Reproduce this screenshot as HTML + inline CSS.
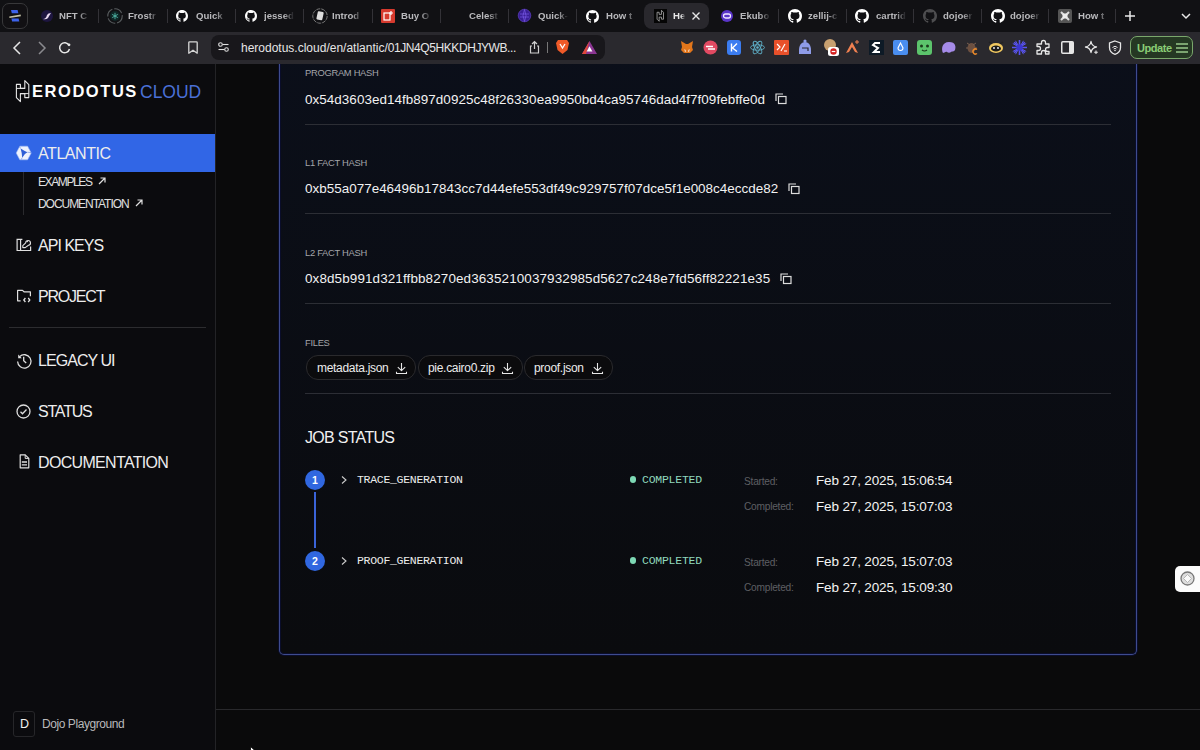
<!DOCTYPE html>
<html><head><meta charset="utf-8">
<style>
*{box-sizing:border-box;margin:0;padding:0}
html,body{width:1200px;height:750px;overflow:hidden;background:#0b0b0d;font-family:"Liberation Sans",sans-serif;color:#fff}
.a{position:absolute}
svg{position:absolute;overflow:visible}
#tabs{position:absolute;left:0;top:0;width:1200px;height:32px;background:#111114;z-index:10}
#toolbar{position:absolute;left:0;top:32px;width:1200px;height:32px;background:#2a292e;z-index:10}
#addr{position:absolute;left:211px;top:3px;width:394px;height:25px;border-radius:8px;background:#18171b}
.tt{position:absolute;top:10px;font-size:9.6px;font-weight:bold;color:#b9b9bc;white-space:nowrap;overflow:hidden;
  -webkit-mask-image:linear-gradient(to right,#000 62%,transparent 95%)}
.sep{position:absolute;top:9px;width:1px;height:14px;background:#333237}
#side{position:absolute;left:0;top:64px;width:216px;height:686px;background:#0b0b0e;border-right:1px solid #232326}
#main{position:absolute;left:216px;top:64px;width:984px;height:686px;background:#0a0a0b}
#card{position:absolute;left:279px;top:20px;width:858px;height:591px;border:1px solid #3e4b8e;border-top:none;border-radius:0 0 5px 5px;background:linear-gradient(#0b0f1a,#0a0b0e);box-shadow:0 0 0 1px #0a0d2a,inset 0 0 0 1px #0a0d2a}
.lbl{position:absolute;font-size:9.4px;letter-spacing:-0.3px;color:#a4a5a9;white-space:nowrap}
.hash{position:absolute;font-size:13.45px;color:#f2f2f2;white-space:nowrap}
.div{position:absolute;left:305px;width:806px;height:1px;background:#2c2e35}
.nav{position:absolute;left:38px;font-size:16px;color:#ededed;white-space:nowrap}
.sub{position:absolute;left:38px;font-size:12px;color:#e0e0e0;white-space:nowrap}
.pill{position:absolute;top:355px;height:25px;border:1.3px solid #2a2a2d;border-radius:12px;background:#0b0b0d}
.pt{position:absolute;top:5px;font-size:12px;letter-spacing:-0.3px;color:#ececec;white-space:nowrap}
.mono{font-family:"Liberation Mono",monospace}
.step{position:absolute;left:305px;width:20px;height:20px;border-radius:10px;background:#3067e0;color:#fff;font-size:10.5px;font-weight:bold;text-align:center;line-height:20px}
.sl{position:absolute;font-size:10.2px;letter-spacing:-0.25px;color:#5e5f63;white-space:nowrap}
.dt{position:absolute;font-size:13.5px;letter-spacing:-0.15px;color:#f4f4f4;white-space:nowrap}
</style></head><body>
<div id="tabs">
  <!-- pinned -->
  <div class="a" style="left:2px;top:3px;width:26px;height:26px;border-radius:7px;border:1.2px solid #38383a;background:#111013"></div>
  <svg style="left:9px;top:9px" width="13" height="13" viewBox="0 0 13 13"><path d="M2 1L8.6 0.9L9.4 4.3L2.8 4.3Z" fill="#3d62ea"/><path d="M0.2 7.4L11.6 5.4L11.9 7.2L0.5 9Z" fill="#c4c2a6"/><path d="M2.4 9.4L9.6 9.4L10.3 12.4L3.1 12.4Z" fill="#3d62ea"/></svg>
  <!-- NFT -->
  <svg style="left:41px;top:10px" width="12" height="12" viewBox="0 0 12 12"><circle cx="6" cy="6" r="6" fill="#1e1640"/><path d="M2 9 Q5 9 6 5 Q7 3 10 3 Q8 6 7 8 Q5 10 2 9Z" fill="#e8d8f0"/></svg>
  <div class="tt" style="left:59px;width:32px">NFT C</div>
  <div class="sep" style="left:98px"></div>
  <svg style="left:107px;top:8px" width="16" height="16" viewBox="0 0 16 16"><circle cx="8" cy="8" r="7.2" fill="none" stroke="#5a5e60" stroke-width="1.1" stroke-dasharray="9 2"/><circle cx="8" cy="8" r="5" fill="#0f2626"/><path d="M8 4.8v6.4M5.2 6.4l5.6 3.2M10.8 6.4l-5.6 3.2" stroke="#4fb8a8" stroke-width="0.9"/></svg>
  <div class="tt" style="left:128px;width:32px">Frostr</div>
  <div class="sep" style="left:167px"></div>
  <svg class="gh" style="left:176px;top:10px" width="12" height="12" viewBox="0 0 16 16"><path fill="#fff" d="M8 0C3.58 0 0 3.58 0 8c0 3.54 2.29 6.53 5.47 7.59.4.07.55-.17.55-.38 0-.19-.01-.82-.01-1.49-2.01.37-2.53-.49-2.69-.94-.09-.23-.48-.94-.82-1.13-.28-.15-.68-.52-.01-.53.63-.01 1.08.58 1.23.82.72 1.21 1.87.87 2.33.66.07-.52.28-.87.51-1.07-1.78-.2-3.640-.89-3.64-3.95 0-.87.31-1.59.82-2.15-.08-.2-.36-1.02.08-2.12 0 0 .67-.21 2.2.82.64-.18 1.32-.27 2-.27.68 0 1.36.09 2 .27 1.53-1.04 2.2-.82 2.2-.82.44 1.1.16 1.92.08 2.12.51.56.82 1.27.82 2.15 0 3.07-1.87 3.75-3.65 3.95.29.25.54.73.54 1.48 0 1.07-.01 1.93-.01 2.2 0 .21.15.46.55.38A8.013 8.013 0 0016 8c0-4.42-3.58-8-8-8z"/></svg>
  <div class="tt" style="left:196px;width:32px">Quick</div>
  <div class="sep" style="left:235px"></div>
  <svg style="left:245px;top:10px" width="12" height="12" viewBox="0 0 16 16"><use href="#ghp"/></svg>
  <div class="tt" style="left:264px;width:32px">jessed</div>
  <div class="sep" style="left:303px"></div>
  <svg style="left:312px;top:8px" width="16" height="16" viewBox="0 0 16 16"><circle cx="8" cy="8" r="7.2" fill="none" stroke="#777" stroke-width="1" stroke-dasharray="4 1"/><rect x="5" y="3.5" width="6" height="8.5" rx="1" fill="#ddd" transform="rotate(12 8 8)"/></svg>
  <div class="tt" style="left:332px;width:32px">Introd</div>
  <div class="sep" style="left:372px"></div>
  <svg style="left:381px;top:9px" width="14" height="14" viewBox="0 0 14 14"><rect width="14" height="14" rx="1" fill="#d63a2e"/><rect x="3" y="4" width="6" height="7" fill="none" stroke="#fff" stroke-width="1.2"/><path d="M10 2v4M8 4h4" stroke="#fff" stroke-width="1.2"/></svg>
  <div class="tt" style="left:401px;width:32px">Buy O</div>
  <div class="sep" style="left:440px"></div>
  <div class="tt" style="left:469px;width:32px">Celest</div>
  <div class="sep" style="left:508px"></div>
  <svg style="left:518px;top:9px" width="13" height="13" viewBox="0 0 13 13"><circle cx="6.5" cy="6.5" r="6.3" fill="#3a1f96" stroke="#6a48d8" stroke-width="0.6"/><path d="M2 5h9M2 8h9M6.5 0.5q-3 6 0 12M6.5 0.5q3 6 0 12" fill="none" stroke="#7a5ae8" stroke-width="0.7"/></svg>
  <div class="tt" style="left:538px;width:32px">Quick-</div>
  <div class="sep" style="left:576px"></div>
  <svg style="left:586px;top:10px" width="13" height="13" viewBox="0 0 16 16"><use href="#ghp"/></svg>
  <div class="tt" style="left:606px;width:32px">How t</div>
  <!-- active tab -->
  <div class="a" style="left:644px;top:3px;width:65px;height:26px;border-radius:8px;background:#29282d"></div>
  <div class="a" style="left:654px;top:9px;width:13px;height:14px;background:#050505"></div>
  <svg style="left:655px;top:10px" width="11" height="12" viewBox="15 80 16 23"><path d="M16.4 84.4H20.4V88.4H24.8V80.6L28.8 84.6V97.6H24.8V93.6H20.4V101.6L16.4 97.6Z" fill="none" stroke="#a8a8a8" stroke-width="1.6" stroke-linejoin="round"/></svg>
  <div class="tt" style="left:673px;width:13px;color:#e8e8e8">He</div>
  <svg style="left:692px;top:12px" width="8" height="8" viewBox="0 0 8 8"><path d="M0.5 0.5l7 7M7.5 0.5l-7 7" stroke="#e6e6e6" stroke-width="1.4"/></svg>
  <svg style="left:721px;top:10px" width="12" height="12" viewBox="0 0 12 12"><circle cx="6" cy="6" r="6" fill="#5a35c8"/><rect x="2.5" y="4" width="7" height="4" rx="2" fill="none" stroke="#f0e8ff" stroke-width="1.3"/></svg>
  <div class="tt" style="left:740px;width:32px">Ekubo</div>
  <div class="sep" style="left:778px"></div>
  <svg style="left:788px;top:9px" width="14" height="14" viewBox="0 0 16 16"><use href="#ghp"/></svg>
  <div class="tt" style="left:808px;width:32px">zellij-c</div>
  <div class="sep" style="left:846px"></div>
  <svg style="left:855px;top:9px" width="14" height="14" viewBox="0 0 16 16"><use href="#ghp"/></svg>
  <div class="tt" style="left:876px;width:32px">cartrid</div>
  <div class="sep" style="left:913px"></div>
  <svg style="left:923px;top:9px;opacity:0.25" width="14" height="14" viewBox="0 0 16 16"><use href="#ghp"/></svg>
  <div class="tt" style="left:943px;width:32px">dojoer</div>
  <div class="sep" style="left:981px"></div>
  <svg style="left:991px;top:9px" width="14" height="14" viewBox="0 0 16 16"><use href="#ghp"/></svg>
  <div class="tt" style="left:1010px;width:32px">dojoer</div>
  <div class="sep" style="left:1048px"></div>
  <svg style="left:1058px;top:9px" width="14" height="14" viewBox="0 0 14 14"><rect width="14" height="14" rx="2" fill="#555"/><path d="M3 3l8 8M11 3l-8 8" stroke="#ddd" stroke-width="2"/><rect x="4.5" y="4.5" width="5" height="5" fill="#eee"/></svg>
  <div class="tt" style="left:1078px;width:32px">How t</div>
  <div class="sep" style="left:1115px"></div>
  <svg style="left:1125px;top:11px" width="10" height="10" viewBox="0 0 10 10"><path d="M5 0v10M0 5h10" stroke="#e8e8e8" stroke-width="1.5"/></svg>
  <svg style="left:1181px;top:13px" width="10" height="6" viewBox="0 0 10 6"><path d="M1 1l4 4 4-4" fill="none" stroke="#e8e8e8" stroke-width="1.5"/></svg>
</div>
<svg width="0" height="0" style="position:absolute"><defs><path id="ghp" fill="#fff" d="M8 0C3.58 0 0 3.580 0 8c0 3.54 2.29 6.53 5.47 7.59.4.07.55-.17.55-.38 0-.19-.01-.82-.01-1.49-2.01.37-2.53-.49-2.69-.94-.09-.23-.48-.94-.82-1.13-.28-.15-.68-.52-.01-.53.63-.01 1.08.58 1.23.82.72 1.21 1.87.87 2.33.66.07-.52.28-.87.51-1.07-1.78-.2-3.64-.89-3.64-3.95 0-.87.31-1.59.82-2.15-.08-.2-.36-1.02.08-2.12 0 0 .67-.21 2.2.82.64-.18 1.32-.27 2-.27.68 0 1.36.09 2 .27 1.53-1.04 2.2-.82 2.2-.82.44 1.1.16 1.92.08 2.12.51.56.82 1.27.82 2.15 0 3.07-1.87 3.75-3.65 3.95.29.25.54.73.54 1.48 0 1.07-.01 1.93-.01 2.2 0 .21.15.46.55.38A8.013 8.013 0 0016 8c0-4.42-3.58-8-8-8z"/></defs></svg>

<div id="toolbar">
  <svg style="left:13px;top:9px" width="8" height="14" viewBox="0 0 8 14"><path d="M7 1L1 7l6 6" fill="none" stroke="#e6e6e6" stroke-width="1.5"/></svg>
  <svg style="left:38px;top:9px" width="8" height="14" viewBox="0 0 8 14"><path d="M1 1l6 6-6 6" fill="none" stroke="#8a8a8e" stroke-width="1.5"/></svg>
  <svg style="left:58px;top:9px" width="13" height="13" viewBox="0 0 13 13"><path d="M11 4.2A5 5 0 1 0 11.5 8" fill="none" stroke="#e6e6e6" stroke-width="1.5"/><circle cx="11" cy="3.8" r="1.4" fill="#e6e6e6"/></svg>
  <svg style="left:188px;top:9px" width="10" height="13" viewBox="0 0 10 13"><path d="M1.6 0.8H8.4Q9.2 0.8 9.2 1.6V12.2L5 9.2L0.8 12.2V1.6Q0.8 0.8 1.6 0.8Z" fill="none" stroke="#d6d6d6" stroke-width="1.3" stroke-linejoin="round"/></svg>
  <div id="addr">
    <svg style="left:7px;top:7px" width="11" height="10" viewBox="0 0 11 10"><circle cx="2.5" cy="2.5" r="1.8" fill="none" stroke="#ddd" stroke-width="1.1"/><path d="M4.5 2.5h6" stroke="#ddd" stroke-width="1.1"/><circle cx="8.5" cy="7.5" r="1.8" fill="none" stroke="#ddd" stroke-width="1.1"/><path d="M0.5 7.5h6" stroke="#ddd" stroke-width="1.1"/></svg>
    <div class="a" style="left:30px;top:6px;font-size:12px;color:#e6e6e6;white-space:nowrap">herodotus.cloud/en/atlantic/<span style="letter-spacing:-0.42px">01JN4Q5HKKDHJYWB...</span></div>
    <svg style="left:318px;top:6px" width="11" height="13" viewBox="0 0 11 13"><path d="M3 5H1.5v7h8V5H8M5.5 8V1M3 3l2.5-2.5L8 3" fill="none" stroke="#cfcfcf" stroke-width="1.2"/></svg>
    <div class="a" style="left:336px;top:7px;width:1px;height:11px;background:#777"></div>
    <svg style="left:345px;top:4px" width="13" height="16" viewBox="0 0 13 16"><path d="M2 1h9l2 3-1.5 7L6.5 15 1.5 11 0 4z" fill="#f05a28"/><path d="M4 5l2.5 4L9 5" stroke="#fff" stroke-width="1.3" fill="none"/></svg>
    <svg style="left:371px;top:6px" width="15" height="13" viewBox="0 0 15 13"><path d="M7.5 0L15 13H0z" fill="#8a3592"/><path d="M7.5 0L0 13H4z" fill="#e0493a"/><path d="M7.5 5.2L10.4 10.4H4.6z" fill="#fff"/></svg>
  </div>
  <!-- extensions -->
  <svg style="left:680px;top:8px" width="14" height="14" viewBox="0 0 14 14"><path d="M1 1l5 3h2l5-3-1 6 1 3-3 3H4l-3-3 1-3z" fill="#e2761b"/><path d="M4 9l2 1v2H5zM10 9l-2 1v2h1z" fill="#f6f6f6" opacity=".6"/></svg>
  <svg style="left:703px;top:40px;top:8px" width="15" height="15" viewBox="0 0 15 15"><circle cx="7.5" cy="7.5" r="7" fill="#e24a62"/><path d="M3 6.5h7M5 9h7" stroke="#fff" stroke-width="1.4"/></svg>
  <svg style="left:727px;top:8px" width="14" height="15" viewBox="0 0 14 15"><rect width="14" height="15" rx="3" fill="#3b7cf0"/><path d="M4.5 3.5v8M10 3.5l-4.5 4.5 4.5 3.5" fill="none" stroke="#fff" stroke-width="1.4"/></svg>
  <svg style="left:750px;top:8px" width="15" height="15" viewBox="0 0 15 15"><g fill="none" stroke="#5fb0c8" stroke-width="0.9"><ellipse cx="7.5" cy="7.5" rx="7" ry="2.7"/><ellipse cx="7.5" cy="7.5" rx="7" ry="2.7" transform="rotate(60 7.5 7.5)"/><ellipse cx="7.5" cy="7.5" rx="7" ry="2.7" transform="rotate(120 7.5 7.5)"/></g><circle cx="7.5" cy="7.5" r="1.3" fill="#5fb0c8"/></svg>
  <svg style="left:774px;top:8px" width="15" height="15" viewBox="0 0 15 15"><rect width="15" height="15" rx="1" fill="#e8502a"/><path d="M3 4l3 3-3 3M7 11l4-7M10 11h3" stroke="#fff" stroke-width="1.2" fill="none"/></svg>
  <svg style="left:798px;top:7px" width="14" height="16" viewBox="0 0 14 16"><path d="M7 3C3 3 1 7 1 11v4h12v-4c0-4-2-8-6-8z" fill="#8f9ce8"/><circle cx="7" cy="2" r="1.6" fill="#8f9ce8"/><path d="M4 9h6v3" stroke="#2a292e" stroke-width="1.2" fill="none"/></svg>
  <svg style="left:823px;top:7px" width="17" height="17" viewBox="0 0 17 17"><circle cx="7" cy="6" r="6" fill="#c8a070"/><rect x="5" y="8" width="11" height="9" rx="2.5" fill="#fff"/><circle cx="10.5" cy="12.5" r="3.2" fill="#d42020"/><path d="M8.7 12.5h3.6" stroke="#fff" stroke-width="1.2"/></svg>
  <svg style="left:845px;top:7px" width="15" height="15" viewBox="0 0 15 15"><path d="M1 14L7 3l6 11-3-1-3-5-3 5z" fill="#f08050"/><path d="M12 1v4M10 3h4" stroke="#f08050" stroke-width="1"/></svg>
  <svg style="left:869px;top:8px" width="15" height="15" viewBox="0 0 15 15"><rect width="15" height="15" fill="#0d1a26"/><path d="M11 3H6L4 5l5 3-4 4h6" fill="none" stroke="#fff" stroke-width="2"/></svg>
  <svg style="left:893px;top:8px" width="15" height="15" viewBox="0 0 15 15"><rect width="15" height="15" rx="2" fill="#4a8ef0"/><path d="M7.5 3L10 8a2.5 2.5 0 1 1-5 0z" fill="none" stroke="#fff" stroke-width="1.1"/></svg>
  <svg style="left:917px;top:8px" width="15" height="15" viewBox="0 0 15 15"><rect width="15" height="15" rx="3" fill="#5cc46c"/><circle cx="4.5" cy="6" r="1.5" fill="#1c3a1c"/><circle cx="10.5" cy="6" r="1.5" fill="#1c3a1c"/><path d="M5 10q2.5 2 5 0" stroke="#1c3a1c" stroke-width="1.2" fill="none"/></svg>
  <svg style="left:941px;top:9px" width="15" height="12" viewBox="0 0 15 12"><path d="M2 12C0 8 1 1 8 1s7 5 6 8c-1 2-3 1-4 2s-3 1-4 0-3 1-4 1z" fill="#a58be8"/></svg>
  <svg style="left:965px;top:8px" width="15" height="15" viewBox="0 0 15 15"><ellipse cx="6.5" cy="8" rx="4" ry="5" fill="#6d5040"/><path d="M2 3l3 2M11 3l-3 2M1 8h2M10 8h2" stroke="#7a6050" stroke-width="1"/><path d="M12 9.5a2.5 2.5 0 1 0 0 4" fill="none" stroke="#e8882a" stroke-width="1.5"/></svg>
  <svg style="left:988px;top:9px" width="16" height="13" viewBox="0 0 16 13"><path d="M1 1l3 2M15 1l-3 2" stroke="#222" stroke-width="1.5"/><ellipse cx="8" cy="7" rx="7" ry="5" fill="#f0c860"/><ellipse cx="8" cy="7.5" rx="5" ry="3" fill="#1a1a1a"/><circle cx="6" cy="7" r="0.9" fill="#fff"/><circle cx="10" cy="7" r="0.9" fill="#fff"/></svg>
  <svg style="left:1012px;top:8px" width="15" height="15" viewBox="0 0 15 15"><g stroke="#5a55f0" stroke-width="1.6"><path d="M7.5 0v15M0 7.5h15M2.2 2.2l10.6 10.6M12.8 2.2L2.2 12.8"/><path d="M3.5 0.8l8 13.4M11.5 0.8l-8 13.4M0.8 3.5l13.4 8M0.8 11.5l13.4-8" stroke-width="1"/></g><circle cx="7.5" cy="7.5" r="3.2" fill="#3c36d0"/></svg>
  <svg style="left:1036px;top:8px" width="15" height="15" viewBox="0 0 15 15"><path d="M5.5 2.5a2 2 0 0 1 4 0V4H13v3.5h-1.5a2 2 0 0 0 0 4H13V14H9.5v-1.5a2 2 0 0 0-4 0V14H1v-3.5h1.5a2 2 0 0 0 0-4H1V4h4.5z" fill="none" stroke="#e6e6e6" stroke-width="1.3" stroke-linejoin="round"/></svg>
  <svg style="left:1061px;top:9px" width="13" height="13" viewBox="0 0 13 13"><rect x="0.75" y="0.75" width="11.5" height="11.5" rx="1" fill="none" stroke="#e6e6e6" stroke-width="1.5"/><rect x="8" y="1" width="4" height="11" fill="#e6e6e6"/></svg>
  <svg style="left:1084px;top:8px" width="15" height="15" viewBox="0 0 15 15"><path d="M7 1.5Q7.8 6.2 12.5 7 7.8 7.8 7 12.5 6.2 7.8 1.5 7 6.2 6.2 7 1.5z" fill="none" stroke="#e6e6e6" stroke-width="1.3" stroke-linejoin="round"/><path d="M12 10.5v3.5M10.2 12.2h3.6" stroke="#e6e6e6" stroke-width="1.1"/></svg>
  <svg style="left:1108px;top:8px" width="14" height="15" viewBox="0 0 14 15"><path d="M7 1l5.5 2v4.5c0 3.5-2.5 5.8-5.5 6.8C4 13.3 1.5 11 1.5 7.5V3z" fill="none" stroke="#e6e6e6" stroke-width="1.3"/><path d="M4.5 7.5a3.5 3.5 0 0 1 5 0M5.7 9a1.8 1.8 0 0 1 2.6 0" fill="none" stroke="#e6e6e6" stroke-width="1"/><circle cx="7" cy="10.5" r="0.8" fill="#e6e6e6"/></svg>
  <div class="a" style="left:1130px;top:4px;width:63px;height:23px;border-radius:7px;border:1.5px solid #7aa86c;background:#253823"></div>
  <div class="a" style="left:1137px;top:10px;font-size:11px;font-weight:bold;letter-spacing:-0.45px;color:#8acd76;white-space:nowrap">Update</div>
  <svg style="left:1176px;top:11px" width="12" height="10" viewBox="0 0 12 10"><path d="M0 1h12M0 5h12M0 9h12" stroke="#98c88a" stroke-width="1.4"/></svg>
</div>

<div id="side">
  <svg style="left:15px;top:16px" width="16" height="23" viewBox="15 80 16 23"><path d="M16.4 84.4H20.4V88.4H24.8V80.6L28.8 84.6V97.6H24.8V93.6H20.4V101.6L16.4 97.6Z" fill="none" stroke="#e6e6e6" stroke-width="1.1" stroke-linejoin="round"/><path d="M16.4 88.4H24.8M20.4 93.6H28.8" fill="none" stroke="#e6e6e6" stroke-width="1"/></svg>
  <div class="a" style="left:32px;top:18px;font-size:16.5px;font-weight:bold;color:#fff;white-space:nowrap;letter-spacing:1.55px">ERODOTUS</div>
  <div class="a" style="left:140px;top:18px;font-size:17.5px;color:#4a70d6;white-space:nowrap">CLOUD</div>

  <div class="a" style="left:0;top:70px;width:215px;height:38px;background:#3166e6"></div>
  <svg style="left:16px;top:82px" width="16" height="14" viewBox="0 0 16 14"><path d="M0.2 7L3.8 0.2H11.6L15.2 7L11.6 13.8H3.8Z" fill="#eef2fd" stroke="#9db8f3" stroke-width="0.6"/><path d="M4.6 2.4Q8.3 4.8 11.4 6.2Q8.2 7.6 6.2 11.7Q5.9 6.4 4.6 2.4Z" fill="#2f5fd6"/><path d="M4.6 2.4L3.6 0.6M11.4 6.2L15 6.6M6.2 11.7L5.2 13.5" stroke="#5d84e4" stroke-width="0.6"/></svg>
  <div class="nav" style="top:81px;letter-spacing:-0.43px">ATLANTIC</div>
  <div class="a" style="left:23px;top:108px;width:1px;height:43px;background:#2a2a2d"></div>
  <div class="sub" style="top:111px;letter-spacing:-1.39px">EXAMPLES</div>
  <svg style="left:98px;top:113px" width="8" height="8" viewBox="0 0 8 8"><path d="M1 7l6-6M2.5 1H7v4.5" fill="none" stroke="#e0e0e0" stroke-width="1.2"/></svg>
  <div class="sub" style="top:133px;letter-spacing:-1.05px">DOCUMENTATION</div>
  <svg style="left:135px;top:135px" width="8" height="8" viewBox="0 0 8 8"><path d="M1 7l6-6M2.5 1H7v4.5" fill="none" stroke="#e0e0e0" stroke-width="1.2"/></svg>

  <svg style="left:16px;top:238px;top:174px" width="16" height="14" viewBox="0 0 16 14"><path d="M6.4 1.3H1.1V12.5H14.6V8.6M4.6 1.3V12.5" fill="none" stroke="#e0e0e0" stroke-width="1.2"/><path d="M6.8 9.6V7.7L9.7 4.8A2.4 2.4 0 1 1 12.5 7.3L9.2 9.6Z" fill="none" stroke="#e0e0e0" stroke-width="1.1" stroke-linejoin="round"/><circle cx="11.3" cy="3.5" r="0.7" fill="#e0e0e0"/></svg>
  <div class="nav" style="top:173px;letter-spacing:-0.96px">API KEYS</div>
  <svg style="left:16px;top:225px" width="16" height="14" viewBox="0 0 16 14"><path d="M4.6 11.8H1.6V1.4H6.5L8 2.8H14.4V7.2" fill="none" stroke="#e0e0e0" stroke-width="1.2" stroke-linejoin="round"/><path d="M9.4 9L7.8 11L9.4 13M12.2 9L13.8 11L12.2 13" fill="none" stroke="#e0e0e0" stroke-width="1.3"/></svg>
  <div class="nav" style="top:224px;letter-spacing:-1.2px">PROJECT</div>
  <div class="a" style="left:9px;top:263px;width:197px;height:1px;background:#2c2c2f"></div>

  <svg style="left:16px;top:288px" width="16" height="16" viewBox="0 0 16 16"><path d="M3.6 4.6A6.7 6.7 0 1 1 1.6 9.6" fill="none" stroke="#e0e0e0" stroke-width="1.3"/><path d="M2.2 2.6V6.2H5.8Z" fill="#e0e0e0"/><path d="M7.7 4.8V8.6L10.2 11" fill="none" stroke="#e0e0e0" stroke-width="1.3"/></svg>
  <div class="nav" style="top:288px;letter-spacing:-0.94px">LEGACY UI</div>
  <svg style="left:16px;top:340px" width="15" height="15" viewBox="0 0 15 15"><circle cx="7.5" cy="7.5" r="6.5" fill="none" stroke="#ddd" stroke-width="1.3"/><path d="M4.5 7.8l2 2 4-4.3" fill="none" stroke="#ddd" stroke-width="1.3"/></svg>
  <div class="nav" style="top:339px;letter-spacing:-1.2px">STATUS</div>
  <svg style="left:19px;top:390px" width="11" height="15" viewBox="0 0 11 15"><path d="M1.2 0.8H6.2L9.8 4.4V13.8H1.2Z" fill="none" stroke="#e0e0e0" stroke-width="1.2" stroke-linejoin="round"/><path d="M6.2 0.8V4.4H9.8" fill="none" stroke="#e0e0e0" stroke-width="1"/><path d="M2.8 8h5.2M2.8 10.9h5.2" stroke="#e0e0e0" stroke-width="1.3"/></svg>
  <div class="nav" style="top:390px;letter-spacing:-0.67px">DOCUMENTATION</div>

  <div class="a" style="left:13px;top:647px;width:22px;height:26px;border:1px solid #262629;border-radius:3px"></div>
  <div class="a" style="left:20px;top:653px;font-size:12.5px;color:#f0f0f0">D</div>
  <div class="a" style="left:42px;top:653px;font-size:12px;color:#b9b9bb;white-space:nowrap;letter-spacing:-0.43px">Dojo Playground</div>
</div>

<div id="main">
  <div class="a" style="left:0;top:645px;width:984px;height:1px;background:#29292c"></div>
</div>
<div id="card" style="top:40px;height:615px"></div>

<div class="lbl" style="left:305px;top:67px">PROGRAM HASH</div>
<div class="hash" style="left:305px;top:92px;letter-spacing:0.046px">0x54d3603ed14fb897d0925c48f26330ea9950bd4ca95746dad4f7f09febffe0d</div>
<svg style="left:775px;top:93px" width="12" height="11" viewBox="0 0 12 11"><path d="M1 8V1h7" fill="none" stroke="#ddd" stroke-width="1.2"/><rect x="3.5" y="3.5" width="7.5" height="7" fill="none" stroke="#ddd" stroke-width="1.2"/></svg>
<div class="div" style="top:124px"></div>
<div class="lbl" style="left:305px;top:157px">L1 FACT HASH</div>
<div class="hash" style="left:305px;top:181px;letter-spacing:0.015px">0xb55a077e46496b17843cc7d44efe553df49c929757f07dce5f1e008c4eccde82</div>
<svg style="left:788px;top:183px" width="12" height="11" viewBox="0 0 12 11"><path d="M1 8V1h7" fill="none" stroke="#ddd" stroke-width="1.2"/><rect x="3.5" y="3.5" width="7.5" height="7" fill="none" stroke="#ddd" stroke-width="1.2"/></svg>
<div class="div" style="top:213px"></div>
<div class="lbl" style="left:305px;top:247px">L2 FACT HASH</div>
<div class="hash" style="left:305px;top:271px;letter-spacing:0.12px">0x8d5b991d321ffbb8270ed3635210037932985d5627c248e7fd56ff82221e35</div>
<svg style="left:780px;top:273px" width="12" height="11" viewBox="0 0 12 11"><path d="M1 8V1h7" fill="none" stroke="#ddd" stroke-width="1.2"/><rect x="3.5" y="3.5" width="7.5" height="7" fill="none" stroke="#ddd" stroke-width="1.2"/></svg>
<div class="div" style="top:303px"></div>
<div class="lbl" style="left:305px;top:337px">FILES</div>

<div class="pill" style="left:306px;width:110px"><div class="pt" style="left:10px">metadata.json</div>
  <svg style="left:89px;top:6px" width="11" height="12" viewBox="0 0 11 12"><path d="M5.5 1V8.4M1.8 5.2L5.5 8.6L9.2 5.2M0.5 9.7V11.5H10.5V9.7" fill="none" stroke="#e6e6e6" stroke-width="1.1" stroke-linejoin="round"/></svg></div>
<div class="pill" style="left:418px;width:105px"><div class="pt" style="left:9px">pie.cairo0.zip</div>
  <svg style="left:83px;top:6px" width="11" height="12" viewBox="0 0 11 12"><path d="M5.5 1V8.4M1.8 5.2L5.5 8.6L9.2 5.2M0.5 9.7V11.5H10.5V9.7" fill="none" stroke="#e6e6e6" stroke-width="1.1" stroke-linejoin="round"/></svg></div>
<div class="pill" style="left:524px;width:89px"><div class="pt" style="left:9px">proof.json</div>
  <svg style="left:67px;top:6px" width="11" height="12" viewBox="0 0 11 12"><path d="M5.5 1V8.4M1.8 5.2L5.5 8.6L9.2 5.2M0.5 9.7V11.5H10.5V9.7" fill="none" stroke="#e6e6e6" stroke-width="1.1" stroke-linejoin="round"/></svg></div>
<div class="div" style="top:393px"></div>

<div class="a" style="left:305px;top:429px;font-size:16px;letter-spacing:-0.7px;color:#f0f0f0;white-space:nowrap">JOB STATUS</div>

<div class="a" style="left:314px;top:492px;width:2px;height:56px;background:#3a63d8"></div>
<div class="step" style="top:470px">1</div>
<div class="step" style="top:551px">2</div>
<svg style="left:341px;top:476px" width="6" height="8" viewBox="0 0 6 8"><path d="M1 0.5L5 4 1 7.5" fill="none" stroke="#ccc" stroke-width="1.1"/></svg>
<svg style="left:341px;top:557px" width="6" height="8" viewBox="0 0 6 8"><path d="M1 0.5L5 4 1 7.5" fill="none" stroke="#ccc" stroke-width="1.1"/></svg>
<div class="a mono" style="left:357px;top:473px;font-size:11.5px;letter-spacing:-0.3px;color:#ececec">TRACE_GENERATION</div>
<div class="a mono" style="left:357px;top:554px;font-size:11.5px;letter-spacing:-0.3px;color:#ececec">PROOF_GENERATION</div>
<div class="a" style="left:629.5px;top:476px;width:6.5px;height:6.5px;border-radius:4px;background:#7dd8b4"></div>
<div class="a" style="left:629.5px;top:557px;width:6.5px;height:6.5px;border-radius:4px;background:#7dd8b4"></div>
<div class="a mono" style="left:642px;top:473px;font-size:11.5px;letter-spacing:-0.25px;color:#8fd8bd">COMPLETED</div>
<div class="a mono" style="left:642px;top:554px;font-size:11.5px;letter-spacing:-0.25px;color:#8fd8bd">COMPLETED</div>

<div class="sl" style="left:744px;top:476px">Started:</div>
<div class="dt" style="left:816px;top:473px">Feb 27, 2025, 15:06:54</div>
<div class="sl" style="left:744px;top:501px">Completed:</div>
<div class="dt" style="left:816px;top:499px">Feb 27, 2025, 15:07:03</div>
<div class="sl" style="left:744px;top:557px">Started:</div>
<div class="dt" style="left:816px;top:554px">Feb 27, 2025, 15:07:03</div>
<div class="sl" style="left:744px;top:582px">Completed:</div>
<div class="dt" style="left:816px;top:580px">Feb 27, 2025, 15:09:30</div>

<!-- floating widget -->
<div class="a" style="left:1175px;top:566px;width:30px;height:26px;border-radius:5px;background:#fbfbfb"></div>
<svg style="left:1180px;top:571px" width="15" height="15" viewBox="0 0 15 15"><circle cx="7.5" cy="7.5" r="6.5" fill="#ddd" stroke="#777" stroke-width="1.3"/><path d="M7.5 3.5l4 4-4 4-4-4z" fill="#fafafa" stroke="#aaa" stroke-width="0.8"/></svg>
<!-- cursor -->
<svg style="left:250px;top:746px" width="10" height="14" viewBox="0 0 10 14"><path d="M0.5 0.5v12l3-3 2 4.5 2-1-2-4.3h4z" fill="#fff" stroke="#000" stroke-width="0.8"/></svg>
</body></html>
